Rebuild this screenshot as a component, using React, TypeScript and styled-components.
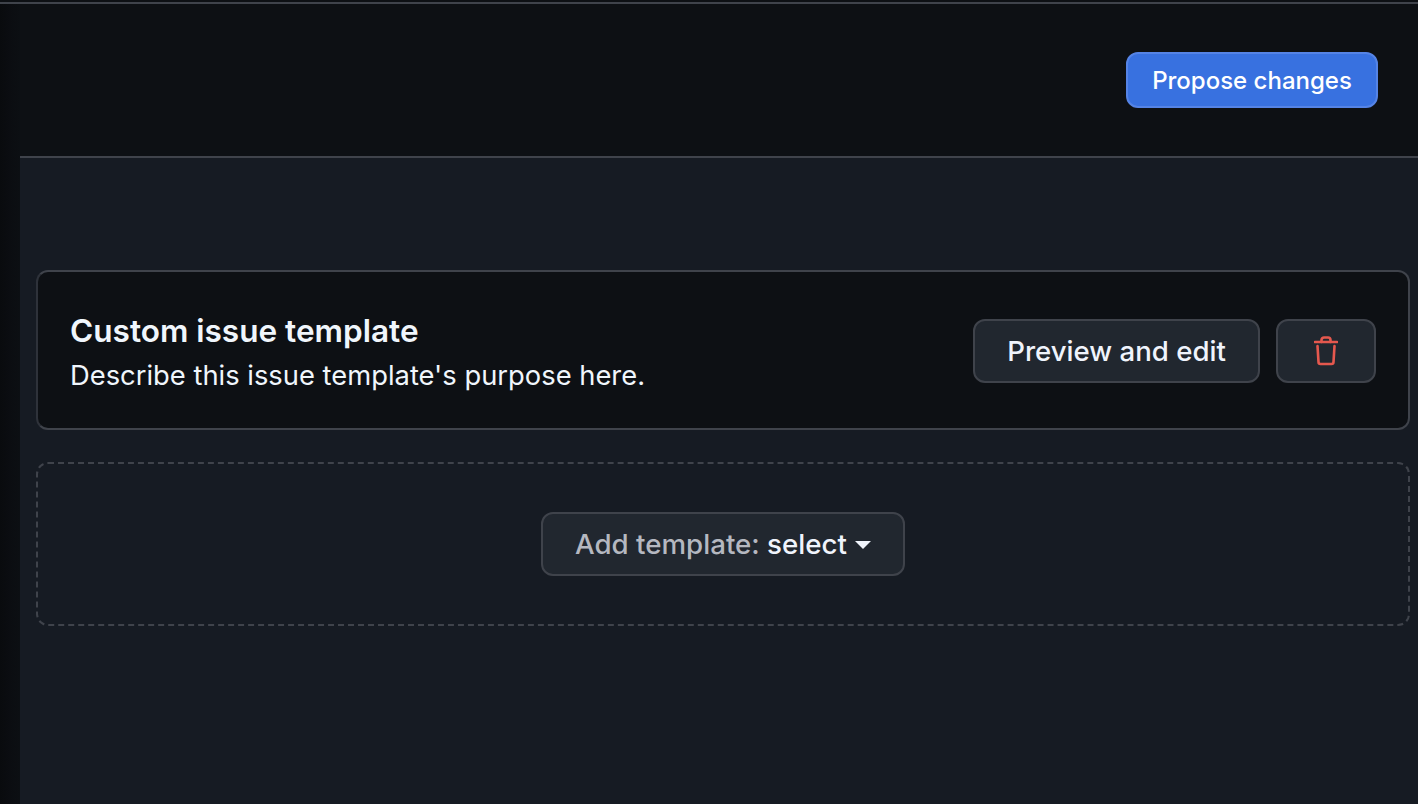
import React from "react";
import styled, { createGlobalStyle } from "styled-components";

const Global = createGlobalStyle`
  html, body { margin: 0; height: 100%; background: #0d1014; }
  body { font-family: Inter, "Liberation Sans", sans-serif; color: #f0f6fc; overflow: hidden; }
  #root { height: 100%; }
  * { box-sizing: border-box; }
`;

const Page = styled.div`
  height: 804px;
  display: flex;
  flex-direction: column;
  padding-top: 2px;
`;
const TopLine = styled.div`
  height: 2px;
  flex: none;
  background: #3f434b;
`;
const Body = styled.div`
  flex: 1;
  display: flex;
  min-height: 0;
`;
const Rail = styled.div`
  width: 20px;
  flex: none;
  background: linear-gradient(90deg, #090b0e 0%, #0b0d11 50%, #0c0f13 100%);
`;
const Main = styled.main`
  flex: 1;
  display: flex;
  flex-direction: column;
  min-width: 0;
`;
const Header = styled.header`
  height: 154px;
  flex: none;
  display: flex;
  justify-content: flex-end;
  padding: 48px 40px 0 0;
  background: #0d1014;
  border-bottom: 2px solid #3f434b;
`;
const Button = styled.button`
  font-family: inherit;
  height: 64px;
  display: inline-flex;
  align-items: center;
  justify-content: center;
  flex: none;
  border-radius: 12px;
  border: 2px solid #3f434b;
  background: #21272f;
  color: #f0f4fc;
  font-size: 27.6px;
  font-weight: 500;
  padding: 0;
`;
const PrimaryButton = styled(Button)`
  width: 252px;
  height: 56px;
  font-size: 24px;
  background: #3871e0;
  border-color: #5584e6;
  color: #ffffff;
`;
const Content = styled.div`
  flex: 1;
  background: #161b23;
  padding: 112px 8px 0 16px;
  display: flex;
  flex-direction: column;
  gap: 32px;
`;
const Card = styled.section`
  height: 160px;
  display: flex;
  align-items: center;
  justify-content: space-between;
  padding: 2px 32px 0 32px;
  background: #0d1014;
  border: 2px solid #3f434b;
  border-left-color: #2e323a;
  border-radius: 12px;
`;
const CardText = styled.div`
  display: flex;
  flex-direction: column;
  gap: 3px;
  padding-top: 2px;
`;
const Title = styled.h3`
  margin: 0;
  font-size: 31.55px;
  line-height: 44px;
  font-weight: 600;
`;
const Description = styled.p`
  margin: 0;
  font-size: 27.35px;
  line-height: 40px;
  font-weight: 400;
`;
const Actions = styled.div`
  display: flex;
  gap: 16px;
`;
const PreviewButton = styled(Button)`
  width: 287px;
`;
const DeleteButton = styled(Button)`
  width: 100px;
`;
const DropZone = styled.div`
  height: 164px;
  display: flex;
  align-items: center;
  justify-content: center;
  border: 2px dashed #3f434b;
  border-radius: 12px;
`;
const AddButton = styled(Button)`
  width: 364px;
  gap: 8px;
  font-size: 27.7px;
`;
const Muted = styled.span`
  color: #b5b8c0;
`;
const Caret = styled.span`
  width: 0;
  height: 0;
  margin-top: 2px;
  border-top: 8px solid #f0f4fc;
  border-left: 8px solid transparent;
  border-right: 8px solid transparent;
`;

const TrashIcon = () => (
  <svg width="24" height="30" viewBox="0 0 24 30" fill="none" stroke="#e5584e" strokeWidth="2.6" strokeLinecap="round" strokeLinejoin="round">
    <path d="M1 6H23" />
    <path d="M7.5 6V4a2.5 2.5 0 0 1 2.5-2.500h4A2.500 2.500 0 0 1 16.500 4v2" />
    <path d="M3.500 10l1 16a2 2 0 0 0 2 2h11a2 2 0 0 0 2-2l1-16" />
  </svg>
);

export default function App() {
  return (
    <>
      <Global />
      <Page>
        <TopLine />
        <Body>
          <Rail />
          <Main>
            <Header>
              <PrimaryButton>Propose changes</PrimaryButton>
            </Header>
            <Content>
              <Card>
                <CardText>
                  <Title>Custom issue template</Title>
                  <Description>Describe this issue template's purpose here.</Description>
                </CardText>
                <Actions>
                  <PreviewButton>Preview and edit</PreviewButton>
                  <DeleteButton aria-label="Delete"><TrashIcon /></DeleteButton>
                </Actions>
              </Card>
              <DropZone>
                <AddButton>
                  <span><Muted>Add template:</Muted> select</span>
                  <Caret />
                </AddButton>
              </DropZone>
            </Content>
          </Main>
        </Body>
      </Page>
    </>
  );
}
